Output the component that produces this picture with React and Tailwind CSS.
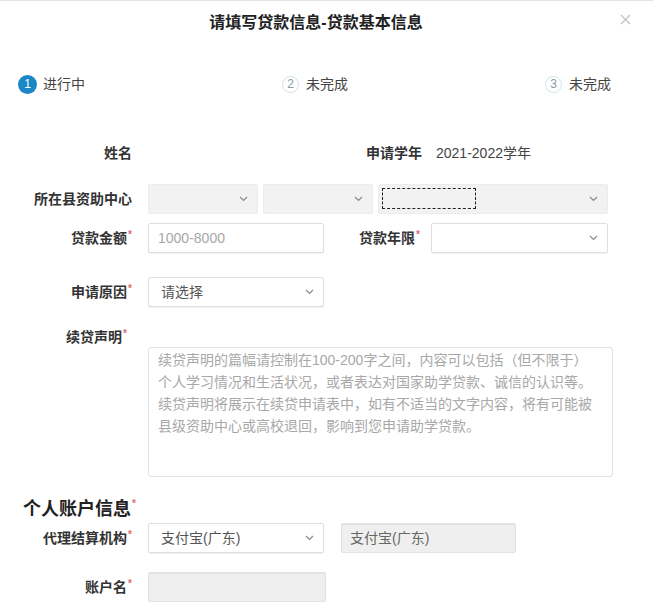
import React from "react";

const Star = () => (
  <span className="relative -top-[5px] ml-[1px] text-[10px] leading-none text-[#e06c6c]">*</span>
);

const Chevron = () => (
  <svg width="9" height="6" viewBox="0 0 9 6" className="shrink-0">
    <path d="M1 1l3.5 3.5L8 1" fill="none" stroke="#8a8a8a" strokeWidth="1.2" />
  </svg>
);

const Select = ({ w, text, disabled, children, textColor = "text-[#555]" }) => (
  <div
    className={`relative h-[30px] ${w} flex items-center justify-between pl-[12px] pr-[9px] rounded-[2px] border ${
      disabled ? "bg-[#f2f2f2] border-[#ececec]" : "bg-white border-[#dedede] shadow-[0_1px_1px_rgba(0,0,0,0.06)]"
    }`}
  >
    <span className={textColor}>{text}</span>
    <Chevron />
    {children}
  </div>
);

const Label = ({ children, star }) => (
  <div className="w-[132px] shrink-0 text-right font-bold text-[#333] whitespace-nowrap">
    {children}
    {star && <Star />}
  </div>
);

const StepCircle = ({ n, active }) =>
  active ? (
    <div className="w-[19px] h-[19px] rounded-full bg-[#1b87c6] text-white text-[12px] leading-none flex items-center justify-center">
      {n}
    </div>
  ) : (
    <div className="w-[17px] h-[17px] rounded-full border border-[#cfe3e6] text-[#8a9aa0] text-[12px] leading-none flex items-center justify-center">
      {n}
    </div>
  );

export default function App() {
  return (
    <div className="w-[653px] h-[610px] overflow-hidden bg-white border-t border-[#e4e4e4] text-[14px] text-[#333] font-['Liberation_Sans','Noto_Sans_CJK_SC',sans-serif]">
      {/* header */}
      <div className="relative h-[43px] flex items-center justify-center">
        <div className="text-[16px] font-bold text-[#222] pr-[21px]">请填写贷款信息-贷款基本信息</div>
        <svg className="absolute right-[22px] top-[13px]" width="11" height="11" viewBox="0 0 11 11">
          <path d="M1 1l9 9M10 1l-9 9" stroke="#c4c4c4" strokeWidth="1.3" />
        </svg>
      </div>

      {/* steps */}
      <div className="mt-[30px] h-[20px] flex items-center justify-between pl-[18px] pr-[42px]">
        <div className="flex items-center gap-[6px]">
          <StepCircle n="1" active />
          <span className="text-[#444]">进行中</span>
        </div>
        <div className="flex items-center gap-[7px]">
          <StepCircle n="2" />
          <span className="text-[#444]">未完成</span>
        </div>
        <div className="flex items-center gap-[7px]">
          <StepCircle n="3" />
          <span className="text-[#444]">未完成</span>
        </div>
      </div>

      {/* row 1 */}
      <div className="mt-[44px] h-[30px] flex items-center">
        <Label>姓名</Label>
        <div className="ml-[234px] font-bold text-[#333]">申请学年</div>
        <div className="ml-[14px] text-[#444]">2021-2022学年</div>
      </div>

      {/* row 2 */}
      <div className="mt-[16px] h-[30px] flex items-center">
        <Label>所在县资助中心</Label>
        <div className="ml-[16px] flex items-center gap-[5px]">
          <Select w="w-[110px]" disabled text="" />
          <Select w="w-[110px]" disabled text="" />
          <Select w="w-[230px]" disabled text="">
            <div className="absolute left-[3px] top-[3px] w-[94px] h-[21px] border border-dashed border-[#222]" />
          </Select>
        </div>
      </div>

      {/* row 3 */}
      <div className="mt-[9px] h-[30px] flex items-center">
        <Label star>贷款金额</Label>
        <div className="ml-[16px] w-[176px] h-[30px] flex items-center pl-[9px] border border-[#dedede] rounded-[2px] bg-white text-[#a8a8a8] shadow-[0_1px_1px_rgba(0,0,0,0.06)]">
          1000-8000
        </div>
        <div className="ml-[35px] font-bold text-[#333] whitespace-nowrap">
          贷款年限
          <Star />
        </div>
        <div className="ml-[11px]">
          <Select w="w-[177px]" text="" />
        </div>
      </div>

      {/* row 4 */}
      <div className="mt-[24px] h-[30px] flex items-center">
        <Label star>申请原因</Label>
        <div className="ml-[16px]">
          <Select w="w-[176px]" text="请选择" />
        </div>
      </div>

      {/* row 5 */}
      <div className="mt-[20px] h-[20px] flex items-center">
        <div className="w-[127px] shrink-0 text-right font-bold text-[#333] whitespace-nowrap">
          续贷声明
          <Star />
        </div>
      </div>
      <div className="ml-[148px] w-[465px] h-[130px] border border-[#e2e2e2] rounded-[3px] px-[9px] pt-[1px] text-[#a8a8a8] leading-[22px] whitespace-nowrap">
        <div>续贷声明的篇幅请控制在100-200字之间，内容可以包括（但不限于）</div>
        <div>个人学习情况和生活状况，或者表达对国家助学贷款、诚信的认识等。</div>
        <div>续贷声明将展示在续贷申请表中，如有不适当的文字内容，将有可能被</div>
        <div>县级资助中心或高校退回，影响到您申请助学贷款。</div>
      </div>

      {/* account section */}
      <div className="mt-[20px] h-[24px] pl-[23px] flex items-center text-[18px] font-bold text-[#222]">
        个人账户信息
        <Star />
      </div>

      <div className="mt-[2px] h-[30px] flex items-center">
        <Label star>代理结算机构</Label>
        <div className="ml-[16px]">
          <Select w="w-[176px]" text="支付宝(广东)" />
        </div>
        <div className="ml-[17px] w-[175px] h-[30px] flex items-center pl-[8px] bg-[#efefef] border border-[#e2e2e2] rounded-[2px] text-[#666] shadow-[inset_0_1px_1px_rgba(0,0,0,0.05)]">
          支付宝(广东)
        </div>
      </div>

      <div className="mt-[19px] h-[30px] flex items-center">
        <Label star>账户名</Label>
        <div className="ml-[16px] w-[178px] h-[30px] bg-[#efefef] border border-[#e2e2e2] rounded-[2px] shadow-[inset_0_1px_1px_rgba(0,0,0,0.05)]" />
      </div>
    </div>
  );
}
